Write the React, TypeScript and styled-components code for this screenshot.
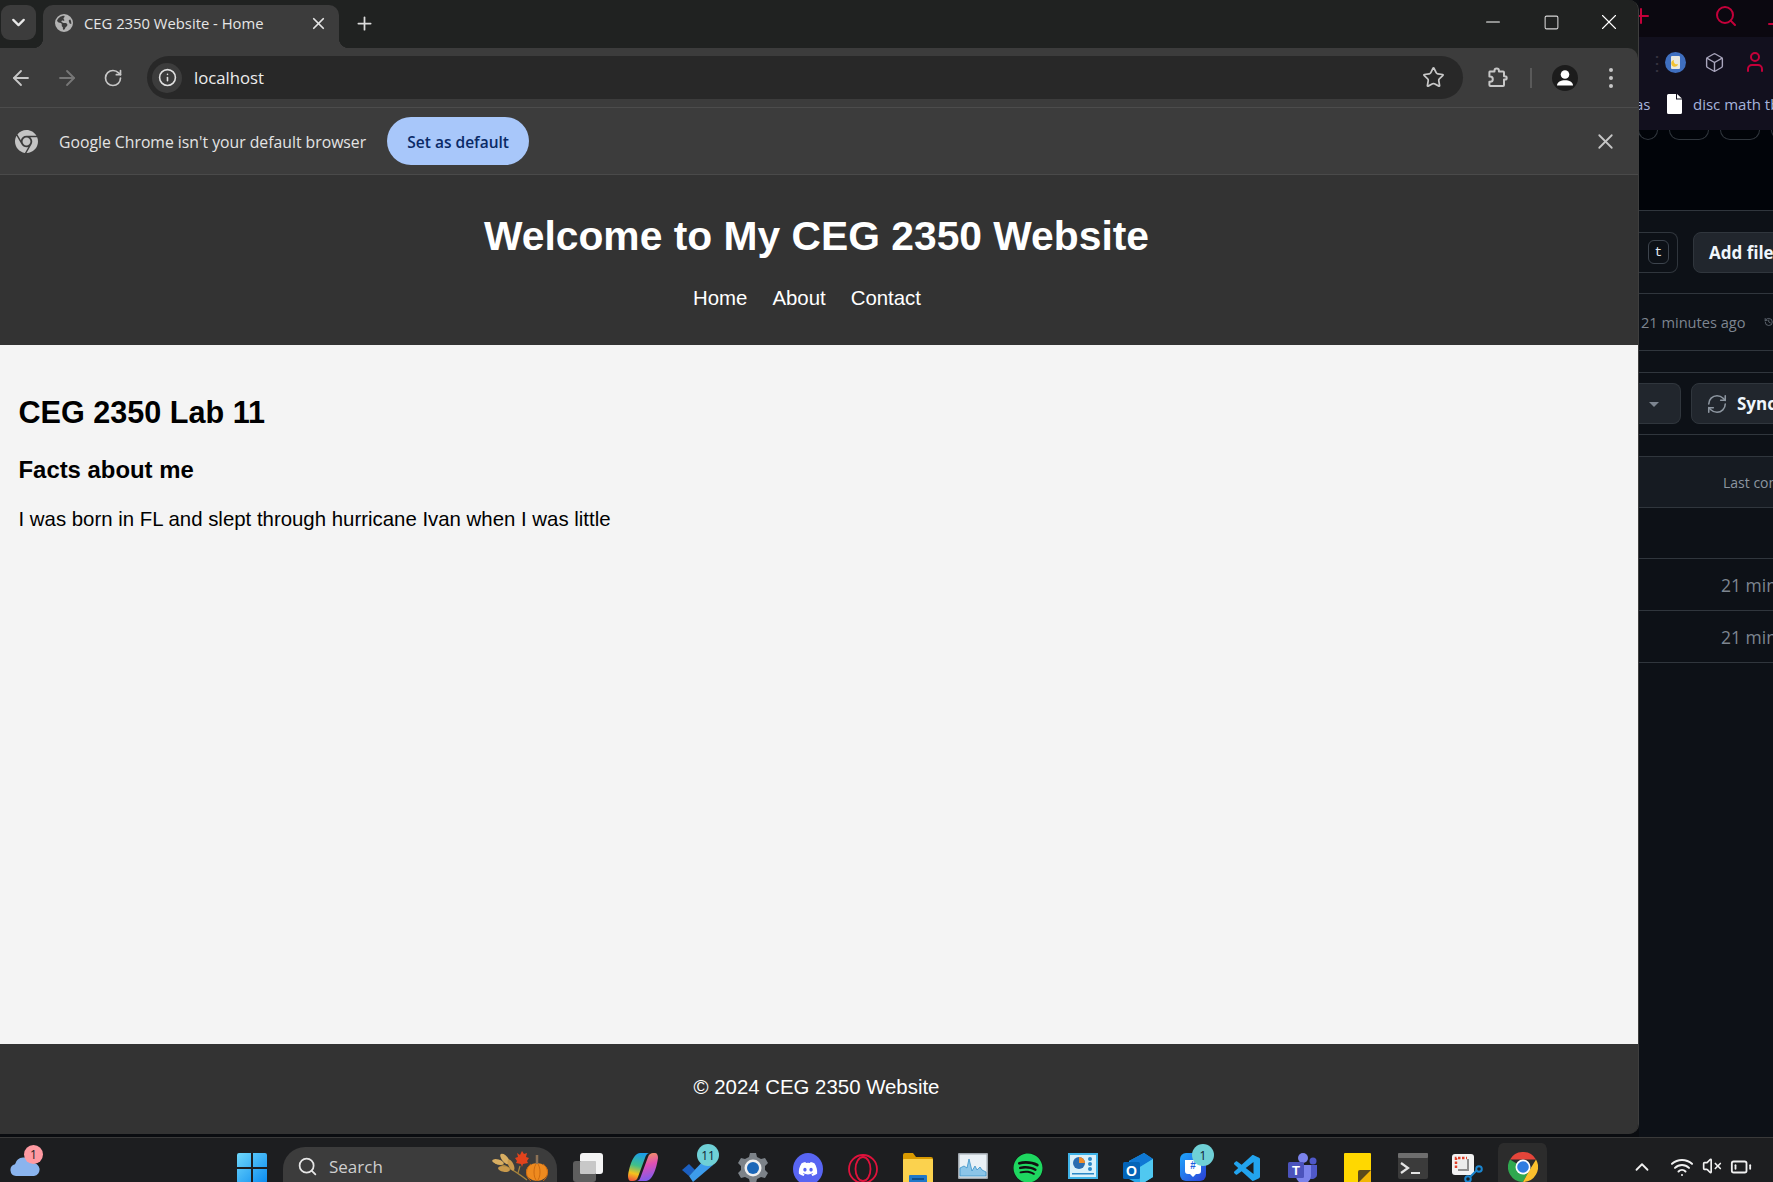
import React from "react";
import styled, { createGlobalStyle } from "styled-components";
import {
  ArrowLeft,
  ArrowRight,
  BatteryLow,
  Box,
  ChevronDown,
  ChevronUp,
  History,
  Info,
  Minus,
  Plus,
  RefreshCw,
  RotateCw,
  Search,
  Square,
  Star,
  User,
  VolumeX,
  Wifi,
  X,
} from "lucide-react";
import { FaDiscord, FaEarthAmericas, FaSpotify, FaChrome } from "react-icons/fa6";
import { VscVscode } from "react-icons/vsc";

const GlobalStyle = createGlobalStyle`
  html, body {
    margin: 0;
    padding: 0;
    overflow: hidden;
    background: #0d1117;
  }
  * {
    box-sizing: border-box;
  }
`;

const ExtensionIcon = () => (
  <svg width="24" height="24" viewBox="0 0 24 24" fill="none" stroke="#c7c7c7" strokeWidth="2" strokeLinejoin="round">
    <path d="M5 5.500h4.500V4.600a2.200 2.200 0 0 1 4.400 0v.9H18a1 1 0 0 1 1 1v3.700h1a1.700 1.700 0 0 1 0 3.400h-1V19a1 1 0 0 1-1 1H5.400a1 1 0 0 1-1-1v-3.200h.8a2.600 2.600 0 0 0 0-5.200h-.8V6.500a1 1 0 0 1 .6-1z" />
  </svg>
);

const AvatarGlyph = () => (
  <svg width="26" height="26" viewBox="0 0 26 26" fill="#fff">
    <circle cx="13" cy="9.500" r="4.300" />
    <path d="M5 20.500c0-3.500 4-5.300 8-5.300s8 1.800 8 5.300z" />
  </svg>
);

const DocIcon = () => (
  <svg width="16" height="20" viewBox="0 0 16 20">
    <path d="M1 1.500A1.500 1.500 0 0 1 2.500 0H10v5.500h6v13a1.500 1.500 0 0 1-1.500 1.500h-12A1.500 1.500 0 0 1 1 18.500z" fill="#fff" />
    <path d="M11 0l5 4.500h-5z" fill="#fff" />
  </svg>
);

const ThemeBadge = () => (
  <svg width="21" height="21" viewBox="0 0 21 21">
    <circle cx="10.500" cy="10.500" r="10.500" fill="#3f6fc0" />
    <rect x="6" y="4" width="9" height="13" rx="1" fill="#e8e8e0" />
    <path d="M9 8a3 3 0 0 0 4 4 3.400 3.400 0 1 1-4-4z" fill="#f2c230" />
  </svg>
);

const WindowsLogo = () => (
  <svg width="30" height="30" viewBox="0 0 30 30">
    <defs>
      <linearGradient id="winGrad" x1="0" y1="0" x2="1" y2="1">
        <stop offset="0" stopColor="#6fd8fb" />
        <stop offset="1" stopColor="#0a8bf0" />
      </linearGradient>
    </defs>
    <path d="M2 0h12v14H0V2a2 2 0 0 1 2-2zM16 0h12a2 2 0 0 1 2 2v12H16zM0 16h14v14H2a2 2 0 0 1-2-2zM16 16h14v12a2 2 0 0 1-2 2H16z" fill="url(#winGrad)" />
  </svg>
);

const TaskViewIcon = () => (
  <svg width="30" height="29" viewBox="0 0 30 29">
    <rect x="7" y="0" width="23" height="21" rx="3" fill="#f4f4f4" />
    <rect x="0" y="8" width="23" height="21" rx="3" fill="#5e5e5e" />
    <rect x="7" y="8" width="16" height="13" rx="1" fill="#c8c8c8" />
  </svg>
);

const CopilotIcon = () => (
  <svg width="30" height="28" viewBox="0 0 30 28">
    <defs>
      <linearGradient id="copA" x1="0.500" y1="0" x2="0.300" y2="1">
        <stop offset="0" stopColor="#1c9ee8" />
        <stop offset="0.45" stopColor="#3fc08a" />
        <stop offset="0.75" stopColor="#f5c21c" />
        <stop offset="1" stopColor="#ef5a3c" />
      </linearGradient>
      <linearGradient id="copB" x1="0.700" y1="1" x2="0.500" y2="0">
        <stop offset="0" stopColor="#f59a5a" />
        <stop offset="0.45" stopColor="#e04fb4" />
        <stop offset="1" stopColor="#7a5cf0" />
      </linearGradient>
    </defs>
    <path d="M12 0h10c-3 0-4 2-5 5l-7 19c-1 3-3 4-5 4H3c-2 0-3-2-3-5C1 15 5 0 12 0z" fill="url(#copA)" />
    <path d="M12 0h10c-3 0-4 2-5 5l-7 19c-1 3-3 4-5 4H3c-2 0-3-2-3-5C1 15 5 0 12 0z" fill="url(#copB)" transform="rotate(180 15 14)" />
  </svg>
);

const TodoIcon = () => (
  <svg width="32" height="29" viewBox="0 -7 32 29">
    <path d="M0 10l7-6 6 6-6 6z" fill="#1b5fc0" />
    <path d="M7 16l16-17 8 6-20 17z" fill="#3d9cec" />
  </svg>
);

const GearIcon = () => (
  <svg width="30" height="30" viewBox="0 0 30 30">
    <path d="M12 0h6l1 4 4 2 4-1 3 5-3 3v4l3 3-3 5-4-1-4 2-1 4h-6l-1-4-4-2-4 1-3-5 3-3v-4L0 10l3-5 4 1 4-2z" fill="#7c8288" />
    <circle cx="15" cy="15" r="8.500" fill="#eeeeee" />
    <circle cx="15" cy="15" r="6" fill="#1a66b8" />
  </svg>
);

const DiscordIcon = () => (
  <DiscordDisc>
    <FaDiscord size={20} color="#fff" />
  </DiscordDisc>
);

const OperaIcon = () => (
  <svg width="30" height="32" viewBox="0 0 30 32" fill="none" stroke="#e0123c" strokeWidth="1.800">
    <circle cx="15" cy="16" r="14" />
    <ellipse cx="15" cy="16" rx="7.500" ry="12" />
  </svg>
);

const FilesIcon = () => (
  <svg width="30" height="32" viewBox="0 0 30 32">
    <path d="M0 2a2 2 0 0 1 2-2h8l3 4h15a2 2 0 0 1 2 2v4H0z" fill="#d99a00" />
    <rect x="0" y="6" width="30" height="26" rx="1" fill="#fbd24e" />
    <rect x="6" y="22" width="18" height="10" rx="1" fill="#1f78c9" />
    <rect x="9" y="25" width="12" height="2" fill="#0e4f8c" />
  </svg>
);

const MonitorIcon = () => (
  <svg width="30" height="26" viewBox="0 0 30 26">
    <rect width="30" height="26" rx="1" fill="#9fa6ad" />
    <rect x="1.500" y="1.500" width="27" height="23" fill="#eaf1f6" />
    <path d="M2 23V15l4-2 3 2 2-9 3 12 3-5 2 4 3-3 2 3 4 2v4z" fill="#8cc5e8" stroke="#3a92c8" strokeWidth="0.800" />
  </svg>
);

const SpotifyIcon = () => (
  <SpotifyDisc>
    <FaSpotify size={30} color="#1ed760" />
  </SpotifyDisc>
);

const ControlIcon = () => (
  <svg width="30" height="28" viewBox="0 0 30 28">
    <rect width="30" height="26" fill="#3fb3e8" />
    <rect x="2" y="2" width="26" height="22" fill="#d9f0fa" />
    <circle cx="11" cy="10" r="6" fill="#2b6cb0" />
    <path d="M11 10V4a6 6 0 0 1 6 6z" fill="#f28c28" />
    <circle cx="22" cy="6" r="2" fill="#2b88c8" />
    <circle cx="22" cy="11" r="2" fill="#2b88c8" />
    <circle cx="22" cy="16" r="2" fill="#2b88c8" />
    <rect x="4" y="20" width="22" height="1.500" fill="#2b88c8" />
  </svg>
);

const OutlookIcon = () => (
  <svg width="30" height="32" viewBox="0 0 30 32">
    <path d="M6 8L21 0l9 6v18L17 32 6 26z" fill="#28a8ea" />
    <path d="M21 0l9 6-13 8L6 8z" fill="#0f78d4" />
    <path d="M17 14l13-8v18L17 32z" fill="#50c8f0" />
    <rect x="0" y="9" width="17" height="17" rx="1.500" fill="#0364b8" />
    <text x="8.500" y="22.500" fontSize="14" fontWeight="700" fill="#fff" textAnchor="middle" fontFamily="Liberation Sans, sans-serif">O</text>
  </svg>
);

const GroupMeIcon = () => (
  <svg width="26" height="28" viewBox="0 0 26 28">
    <defs>
      <linearGradient id="gmGrad" x1="0" y1="0" x2="1" y2="1">
        <stop offset="0" stopColor="#1ea7fd" />
        <stop offset="1" stopColor="#2b3fd6" />
      </linearGradient>
    </defs>
    <rect width="26" height="28" rx="6" fill="url(#gmGrad)" />
    <path d="M5 7h16v11a3 3 0 0 1-3 3h-2l-3 3-3-3H8a3 3 0 0 1-3-3z" fill="#fff" />
    <text x="13" y="16" fontSize="10" fontWeight="700" fill="#1d5fe0" textAnchor="middle" fontFamily="Liberation Sans, sans-serif">#</text>
  </svg>
);

const TeamsIcon = () => (
  <svg width="30" height="30" viewBox="0 0 30 30">
    <circle cx="15" cy="5" r="5" fill="#7b83eb" />
    <circle cx="25" cy="8" r="3.500" fill="#5059c9" />
    <path d="M19 12h10v10a5 5 0 0 1-8 3z" fill="#5059c9" />
    <path d="M8 12h15v11a7 7 0 0 1-15 0z" fill="#7b83eb" />
    <rect x="0" y="9" width="16" height="16" rx="1.500" fill="#4b53bc" />
    <text x="8" y="21.500" fontSize="13" fontWeight="700" fill="#fff" textAnchor="middle" fontFamily="Liberation Sans, sans-serif">T</text>
  </svg>
);

const StickyIcon = () => (
  <svg width="27" height="30" viewBox="0 0 27 30">
    <path d="M1 0h25a1 1 0 0 1 1 1v18L16 30H1a1 1 0 0 1-1-1V1a1 1 0 0 1 1-1z" fill="#ffd800" />
    <path d="M14 30V19a2 2 0 0 1 2-2h11v13z" fill="#f2b705" />
    <path d="M14 30V19a2 2 0 0 1 2-2h11z" fill="#5a4a1c" />
  </svg>
);

const TerminalIcon = () => (
  <svg width="30" height="26" viewBox="0 0 30 26">
    <rect width="30" height="26" rx="2" fill="#3b3b3b" />
    <rect width="30" height="5" rx="1" fill="#6e6e6e" />
    <path d="M3 10l7 5-7 5" fill="none" stroke="#e4e4e4" strokeWidth="2.200" />
    <rect x="13" y="19" width="9" height="2" fill="#e4e4e4" />
  </svg>
);

const SnipIcon = () => (
  <svg width="32" height="30" viewBox="0 -1 32 30">
    <rect width="22" height="21" rx="3" fill="#f2f2f2" />
    <path d="M4 14V4h11" fill="none" stroke="#e0402a" strokeWidth="2.500" strokeDasharray="2.500 1.500" />
    <path d="M6 6h9v9H6z" fill="#ececec" />
    <path d="M16 5v11H6" fill="none" stroke="#8f8f8f" strokeWidth="2" />
    <circle cx="27" cy="15" r="2.800" fill="none" stroke="#1a86d0" strokeWidth="2" />
    <circle cx="16" cy="25" r="2.800" fill="none" stroke="#1a86d0" strokeWidth="2" />
    <path d="M24.500 16.500l-6 6" stroke="#1a86d0" strokeWidth="2" />
  </svg>
);

const ChromeColorIcon = () => (
  <svg width="30" height="30" viewBox="0 0 30 30">
    <path d="M2 7.500A15 15 0 0 1 28 7.500H15z" fill="#e5453a" />
    <path d="M2 7.500A15 15 0 0 0 15 30l6-11z" fill="#2fa84f" />
    <path d="M28 7.500A15 15 0 0 1 15 30l6-11z" fill="#fbc02d" />
    <circle cx="15" cy="15" r="7.500" fill="#fff" />
    <circle cx="15" cy="15" r="5.800" fill="#2f7de1" />
  </svg>
);

const LeavesIcon = () => (
  <svg width="58" height="30" viewBox="0 0 58 30">
    <path d="M4 12c8 1 18 6 32 17" fill="none" stroke="#a8843c" strokeWidth="1.300" />
    <ellipse cx="7" cy="11" rx="6" ry="2.500" fill="#d8ae62" transform="rotate(15 7 11)" />
    <ellipse cx="14" cy="8" rx="6.500" ry="3" fill="#d8ae62" transform="rotate(50 14 8)" />
    <ellipse cx="13" cy="18" rx="6" ry="2.800" fill="#c99a4c" transform="rotate(10 13 18)" />
    <ellipse cx="20" cy="14" rx="6" ry="2.600" fill="#c99a4c" transform="rotate(65 20 14)" />
    <path d="M29 4l2-4 2 3 3-1-1 4 3 1-2 3 1 2-5 1-1 3-1-3-5-1 1-2-2-3 3-1-1-4z" fill="#e2431c" />
    <path d="M29 15l-2 7" stroke="#a8843c" strokeWidth="1.200" />
    <ellipse cx="46" cy="21" rx="11" ry="9" fill="#ee8a1f" />
    <path d="M46 12c-4 3-4 15 0 18M46 12c4 3 4 15 0 18M40 13c-6 4-6 13 0 17M52 13c6 4 6 13 0 17" fill="none" stroke="#c8670f" strokeWidth="0.900" />
    <path d="M46 13V4" stroke="#8d7256" strokeWidth="2.500" />
  </svg>
);

const tasks: { name: string; icon: React.ReactNode; badge?: string; active?: boolean }[] = [
  { name: "task-view", icon: <TaskViewIcon /> },
  { name: "copilot", icon: <CopilotIcon /> },
  { name: "todo", icon: <TodoIcon />, badge: "11" },
  { name: "settings", icon: <GearIcon /> },
  { name: "discord", icon: <DiscordIcon /> },
  { name: "opera", icon: <OperaIcon /> },
  { name: "files", icon: <FilesIcon /> },
  { name: "monitor", icon: <MonitorIcon /> },
  { name: "spotify", icon: <SpotifyIcon /> },
  { name: "control", icon: <ControlIcon /> },
  { name: "outlook", icon: <OutlookIcon /> },
  { name: "groupme", icon: <GroupMeIcon />, badge: "1" },
  { name: "vscode", icon: <VscVscode size={32} color="#22a4ee" /> },
  { name: "teams", icon: <TeamsIcon /> },
  { name: "sticky", icon: <StickyIcon /> },
  { name: "terminal", icon: <TerminalIcon /> },
  { name: "snip", icon: <SnipIcon /> },
  { name: "chrome", icon: <ChromeColorIcon />, active: true },
];

const App: React.FC = () => {
  return (
    <>
      <GlobalStyle />
      <Desktop>
        <Workspace>
          <BrowserWindow>
            <TabStrip>
              <TabSearchButton>
                <ChevronDown size={21} strokeWidth={2.6} color="#e8e8e8" />
              </TabSearchButton>
              <Tab>
                <FaEarthAmericas size={18} color="#b4b4b4" />
                <TabTitle>CEG 2350 Website - Home</TabTitle>
                <X size={19} strokeWidth={2.2} color="#e4e4e4" />
              </Tab>
              <NewTabButton>
                <Plus size={21} strokeWidth={2} color="#dcdcdc" />
              </NewTabButton>
              <WindowControls>
                <ControlButton>
                  <Minus size={22} strokeWidth={1.1} color="#fff" />
                </ControlButton>
                <ControlButton>
                  <Square size={17} strokeWidth={1.5} color="#d8d8d8" />
                </ControlButton>
                <ControlButton>
                  <X size={26} strokeWidth={1} color="#fff" />
                </ControlButton>
              </WindowControls>
            </TabStrip>

            <Toolbar>
              <NavButton>
                <ArrowLeft size={24} strokeWidth={1.8} color="#c7c7c7" />
              </NavButton>
              <NavButton>
                <ArrowRight size={24} strokeWidth={1.8} color="#777" />
              </NavButton>
              <NavButton>
                <RotateCw size={20} color="#c7c7c7" />
              </NavButton>
              <Omnibox>
                <InfoChip>
                  <Info size={19} color="#e0e0e0" />
                </InfoChip>
                <UrlText>localhost</UrlText>
                <Star size={23} strokeWidth={1.8} color="#c7c7c7" />
              </Omnibox>
              <ToolbarIcons>
                <ExtensionIcon />
                <ToolbarDivider />
                <Avatar>
                  <AvatarGlyph />
                </Avatar>
                <KebabDots>
                  <i />
                  <i />
                  <i />
                </KebabDots>
              </ToolbarIcons>
            </Toolbar>

            <InfoBar>
              <FaChrome size={23} color="#c4c4c4" />
              <InfoText>Google Chrome isn't your default browser</InfoText>
              <DefaultButton>Set as default</DefaultButton>
              <InfoClose>
                <X size={25} strokeWidth={1.7} color="#c7c7c7" />
              </InfoClose>
            </InfoBar>

            <SiteHeader>
              <SiteTitle>Welcome to My CEG 2350 Website</SiteTitle>
              <SiteNav>
                <a>Home</a>
                <a>About</a>
                <a>Contact</a>
              </SiteNav>
            </SiteHeader>

            <SiteMain>
              <LabHeading>CEG 2350 Lab 11</LabHeading>
              <FactsHeading>Facts about me</FactsHeading>
              <FactText>I was born in FL and slept through hurricane Ivan when I was little</FactText>
            </SiteMain>

            <SiteFooter>© 2024 CEG 2350 Website</SiteFooter>
          </BrowserWindow>

          <BehindWindow>
            <BehindTopStrip>
              <Plus size={24} color="#c4003a" />
              <Search size={24} color="#c4003a" />
              <Minus size={24} color="#c4003a" />
            </BehindTopStrip>
            <BehindExtensions>
              <ExtensionRow>
                <FaintDots>⋮</FaintDots>
                <ThemeBadge />
                <Box size={21} strokeWidth={1.6} color="#a9a6bd" />
                <User size={24} color="#c4003a" />
              </ExtensionRow>
              <BookmarkRow>
                <span>as</span>
                <DocIcon />
                <span>disc math tb</span>
              </BookmarkRow>
            </BehindExtensions>
            <BehindTabs>
              <OutlinePill $width={20} />
              <OutlinePill $width={40} />
              <OutlinePill $width={40} />
              <OutlinePill $width={20} />
            </BehindTabs>

            <RepoRow $height={83}>
              <SearchStub>
                <KeyCap>t</KeyCap>
              </SearchStub>
              <AddFileButton>Add file</AddFileButton>
            </RepoRow>
            <RepoRow $height={57}>
              <MutedText>21 minutes ago</MutedText>
              <History size={24} strokeWidth={1.7} color="#7d8590" />
            </RepoRow>
            <RepoRow $height={22} />
            <RepoRow $height={62}>
              <CaretStub />
              <SyncButton>
                <RefreshCw size={22} strokeWidth={1.7} color="#8d96a0" />
                Sync
              </SyncButton>
            </RepoRow>
            <RepoRow $height={22} />
            <TableHead>Last commit date</TableHead>
            <RepoRow $height={51} />
            <FileDate>21 minutes ago</FileDate>
            <FileDate>21 minutes ago</FileDate>
          </BehindWindow>
        </Workspace>

        <Taskbar>
          <WeatherWidget>
            <svg width="30" height="22" viewBox="0 0 30 22">
              <path d="M6 22a6 6 0 0 1-1-11.800A9 9 0 0 1 22 9a6.500 6.500 0 0 1 2 13z" fill="#8ab4ee" />
            </svg>
            <WeatherBadge>1</WeatherBadge>
          </WeatherWidget>
          <StartButton>
            <WindowsLogo />
          </StartButton>
          <SearchBox>
            <Search size={21} color="#e6e6e6" />
            <SearchLabel>Search</SearchLabel>
            <LeavesIcon />
          </SearchBox>
          {tasks.map((task) => (
            <TaskSlot key={task.name} $active={task.active}>
              {task.icon}
              {task.badge && <TaskBadge>{task.badge}</TaskBadge>}
            </TaskSlot>
          ))}
          <Tray>
            <ChevronUp size={22} color="#f0f0f0" />
            <Wifi size={24} color="#f0f0f0" />
            <VolumeX size={20} color="#f0f0f0" />
            <BatteryLow size={22} color="#f0f0f0" />
          </Tray>
        </Taskbar>
      </Desktop>
    </>
  );
};

const Desktop = styled.div`
  width: 1773px;
  height: 1182px;
  display: flex;
  flex-direction: column;
  overflow: hidden;
  background: #0a0c10;
`;

const Workspace = styled.div`
  display: flex;
  height: 1137px;
  flex: none;
`;

const BrowserWindow = styled.div`
  width: 1639px;
  height: 1134px;
  flex: none;
  display: flex;
  flex-direction: column;
  overflow: hidden;
  border-right: 1px solid #3e3e3e;
  border-radius: 0 10px 10px 0;
  background: #202221;
`;

const TabStrip = styled.div`
  height: 48px;
  flex: none;
  display: flex;
  align-items: flex-end;
  padding-left: 1px;
  background: #202221;
`;

const TabSearchButton = styled.div`
  width: 35px;
  height: 35px;
  margin-bottom: 8px;
  display: flex;
  align-items: center;
  justify-content: center;
  border-radius: 9px;
  background: #3c3c3c;
`;

const Tab = styled.div`
  position: relative;
  width: 296px;
  height: 43px;
  margin-left: 7px;
  padding: 0 11px 7px 12px;
  display: flex;
  align-items: center;
  border-radius: 10px 10px 0 0;
  background: #3c3c3c;

  &::before,
  &::after {
    content: "";
    position: absolute;
    bottom: 0;
    width: 10px;
    height: 10px;
  }
  &::before {
    left: -10px;
    background: radial-gradient(circle at 0 0, transparent 10px, #3c3c3c 10.5px);
  }
  &::after {
    right: -10px;
    background: radial-gradient(circle at 100% 0, transparent 10px, #3c3c3c 10.5px);
  }
`;

const TabTitle = styled.span`
  flex: 1;
  margin-left: 11px;
  font: 14.800px "Open Sans", sans-serif;
  color: #e6e6e6;
  white-space: nowrap;
`;

const NewTabButton = styled.div`
  width: 28px;
  height: 28px;
  margin: 0 0 11px 11px;
  display: flex;
  align-items: center;
  justify-content: center;
`;

const WindowControls = styled.div`
  margin-left: auto;
  height: 100%;
  display: flex;
`;

const ControlButton = styled.div`
  width: 58px;
  padding-bottom: 4px;
  display: flex;
  align-items: center;
  justify-content: center;
`;

const Toolbar = styled.div`
  height: 60px;
  flex: none;
  display: flex;
  align-items: center;
  background: #3c3c3c;
  border-bottom: 1px solid #4c4c4c;
  border-top-right-radius: 10px;
`;

const NavButton = styled.div`
  width: 46px;
  display: flex;
  align-items: center;
  justify-content: center;

  &:first-child {
    margin-left: -2px;
  }
`;

const Omnibox = styled.div`
  width: 1316px;
  height: 43px;
  margin-left: 11px;
  padding: 0 18px 0 5px;
  display: flex;
  align-items: center;
  border-radius: 22px;
  background: #282828;
`;

const InfoChip = styled.div`
  width: 30px;
  height: 30px;
  display: flex;
  align-items: center;
  justify-content: center;
  border-radius: 50%;
  background: #3c3c3c;
`;

const UrlText = styled.span`
  flex: 1;
  margin-left: 12px;
  font: 16.700px "Open Sans", sans-serif;
  color: #ededed;
`;

const ToolbarIcons = styled.div`
  flex: 1;
  display: flex;
  align-items: center;
  padding-left: 22px;
`;

const ToolbarDivider = styled.div`
  width: 2px;
  height: 20px;
  margin: 0 20px 0 21px;
  background: #5a5a5a;
`;

const Avatar = styled.div`
  width: 26px;
  height: 26px;
  display: flex;
  align-items: center;
  justify-content: center;
  border-radius: 50%;
  background: #1c1c1c;
`;

const KebabDots = styled.div`
  margin-left: 31px;
  display: flex;
  flex-direction: column;
  gap: 4px;

  i {
    width: 4px;
    height: 4px;
    border-radius: 50%;
    background: #c7c7c7;
  }
`;

const InfoBar = styled.div`
  height: 67px;
  flex: none;
  display: flex;
  align-items: center;
  padding: 0 20px 0 15px;
  background: #3c3c3c;
  border-bottom: 1px solid #4a4a4a;
`;

const InfoText = styled.span`
  margin-left: 21px;
  padding-top: 2px;
  font: 15.750px "Open Sans", sans-serif;
  color: #e4e4e4;
  white-space: nowrap;
`;

const DefaultButton = styled.button`
  width: 142px;
  height: 48px;
  margin-left: 21px;
  padding: 2px 0 0;
  border: none;
  border-radius: 24px;
  background: #a8c7fa;
  color: #0a2a66;
  font: 600 15.500px "Open Sans", sans-serif;
`;

const InfoClose = styled.div`
  margin-left: auto;
  display: flex;
`;

const SiteHeader = styled.header`
  height: 170px;
  flex: none;
  padding: 38px 5px 0 0;
  background: #333;
  color: #fff;
  text-align: center;
  font-family: "Liberation Sans", Arial, sans-serif;
`;

const SiteTitle = styled.h1`
  margin: 0 0 27px;
  font-size: 40.800px;
  font-weight: 700;
`;

const SiteNav = styled.nav`
  display: flex;
  justify-content: center;
  gap: 25px;
  padding-right: 19px;
  font-size: 20.400px;
`;

const SiteMain = styled.main`
  flex: 1;
  padding: 50px 0 0 18.500px;
  background: #f4f4f4;
  color: #000;
  font-family: "Liberation Sans", Arial, sans-serif;
`;

const LabHeading = styled.h2`
  margin: 0 0 26px;
  font-size: 30.600px;
  font-weight: 700;
`;

const FactsHeading = styled.h3`
  margin: 0 0 23.500px;
  font-size: 23.900px;
  font-weight: 700;
`;

const FactText = styled.p`
  margin: 0;
  font-size: 20.400px;
`;

const SiteFooter = styled.footer`
  height: 90px;
  flex: none;
  display: flex;
  align-items: center;
  justify-content: center;
  padding: 0 5px 3px 0;
  background: #333;
  color: #fff;
  font: 20.400px "Liberation Sans", Arial, sans-serif;
`;

const BehindWindow = styled.div`
  flex: 1;
  min-width: 0;
  overflow: hidden;
  display: flex;
  flex-direction: column;
  background: #0d1117;
  font-family: "Open Sans", sans-serif;
`;

const BehindTopStrip = styled.div`
  height: 37px;
  flex: none;
  display: flex;
  align-items: flex-start;
  gap: 61px;
  padding-top: 4px;
  margin-left: -10px;
  width: 190px;
  background: #0b0810;

  svg:last-child {
    margin-top: 8px;
    margin-left: -35px;
  }
`;

const BehindExtensions = styled.div`
  height: 93px;
  flex: none;
  background: #12101e;
`;

const ExtensionRow = styled.div`
  height: 50px;
  display: flex;
  align-items: center;
  gap: 18px;
  padding-left: 8px;
`;

const FaintDots = styled.span`
  width: 3px;
  margin-right: -3px;
  color: #35323f;
  font-size: 20px;
`;

const BookmarkRow = styled.div`
  height: 34px;
  display: flex;
  align-items: center;
  white-space: nowrap;
  font-size: 15px;
  color: #a6b4dc;

  svg {
    flex: none;
    margin: 0 11px 0 17px;
  }
  span:first-child {
    flex: none;
    width: 14px;
    margin-left: -4px;
  }
`;

const BehindTabs = styled.div`
  height: 81px;
  flex: none;
  display: flex;
  gap: 11px;
  margin-left: -1px;
  background: #010409;
  border-bottom: 1px solid #30363d;
`;

const OutlinePill = styled.div<{ $width: number }>`
  flex: none;
  width: ${(p) => p.$width}px;
  height: 10px;
  border: 1px solid #30363d;
  border-top: none;
  border-radius: 0 0 10px 10px;
`;

const RepoRow = styled.div<{ $height: number }>`
  height: ${(p) => p.$height}px;
  flex: none;
  display: flex;
  align-items: center;
  white-space: nowrap;
  border-bottom: 1px solid #30363d;
`;

const SearchStub = styled.div`
  width: 39px;
  height: 41px;
  flex: none;
  display: flex;
  align-items: center;
  padding-left: 9px;
  border: 1px solid #30363d;
  border-left: none;
  border-radius: 0 8px 8px 0;
`;

const KeyCap = styled.kbd`
  width: 21px;
  height: 24px;
  display: flex;
  align-items: center;
  justify-content: center;
  border: 1px solid #3d444d;
  border-radius: 6px;
  color: #e6edf3;
  font: 13px "Liberation Mono", monospace;
`;

const AddFileButton = styled.div`
  height: 41px;
  flex: none;
  margin-left: 15px;
  padding: 0 15px;
  display: flex;
  align-items: center;
  border: 1px solid #30363d;
  border-radius: 8px;
  background: #21262d;
  color: #f0f6fc;
  font-size: 17px;
  font-weight: 700;
`;

const MutedText = styled.span`
  margin: 0 18px 0 2px;
  color: #7d8590;
  font-size: 14.600px;
`;

const CaretStub = styled.div`
  position: relative;
  width: 42px;
  height: 41px;
  flex: none;
  border: 1px solid #30363d;
  border-left: none;
  border-radius: 0 8px 8px 0;
  background: #21262d;

  &::after {
    content: "";
    position: absolute;
    left: 10px;
    top: 18px;
    border: 5px solid transparent;
    border-top-color: #7d8590;
  }
`;

const SyncButton = styled.div`
  height: 41px;
  flex: none;
  margin-left: 10px;
  padding: 0 14px;
  display: flex;
  align-items: center;
  gap: 9px;
  border: 1px solid #30363d;
  border-radius: 8px;
  background: #21262d;
  color: #f0f6fc;
  font-size: 17px;
  font-weight: 700;
`;

const TableHead = styled.div`
  height: 51px;
  flex: none;
  display: flex;
  align-items: center;
  padding-left: 84px;
  white-space: nowrap;
  border-bottom: 1px solid #30363d;
  background: #161b22;
  color: #8d96a0;
  font-size: 14px;
  font-weight: 500;
`;

const FileDate = styled.div`
  height: 52px;
  flex: none;
  display: flex;
  align-items: center;
  padding-left: 82px;
  white-space: nowrap;
  border-bottom: 1px solid #30363d;
  color: #7d8590;
  font-size: 17.500px;
`;

const Taskbar = styled.div`
  height: 45px;
  flex: none;
  display: flex;
  border-top: 1px solid #3a3a3a;
  background: #1d1e20;
`;

const WeatherWidget = styled.div`
  position: relative;
  width: 224px;
  flex: none;
  padding: 16px 0 0 10px;
`;

const WeatherBadge = styled.span`
  position: absolute;
  left: 24px;
  top: 7px;
  width: 19px;
  height: 19px;
  display: flex;
  align-items: center;
  justify-content: center;
  border-radius: 50%;
  background: #ff9aa2;
  color: #222;
  font: 12px "Open Sans", sans-serif;
`;

const StartButton = styled.div`
  width: 55px;
  flex: none;
  padding-top: 15px;
  display: flex;
  justify-content: center;
`;

const SearchBox = styled.div`
  width: 274px;
  height: 44px;
  flex: none;
  margin: 9px 3px 0 4px;
  padding: 0 8px 6px 14px;
  display: flex;
  align-items: center;
  border-radius: 22px 22px 0 0;
  background: #3c3c3c;
`;

const SearchLabel = styled.span`
  flex: 1;
  margin-left: 11px;
  font: 17px "Open Sans", sans-serif;
  color: #cfcfcf;
`;

const TaskSlot = styled.div<{ $active?: boolean }>`
  position: relative;
  width: 55px;
  flex: none;
  display: flex;
  justify-content: center;
  border-left: 3px solid transparent;
  border-right: 3px solid transparent;
  border-radius: 8px 8px 0 0;
  background-clip: padding-box;
  margin-top: ${(p) => (p.$active ? "5px" : "0")};
  padding-top: ${(p) => (p.$active ? "9px" : "15px")};
  background-color: ${(p) => (p.$active ? "#2c2c2c" : "transparent")};
`;

const DiscordDisc = styled.div`
  width: 30px;
  height: 32px;
  display: flex;
  align-items: center;
  justify-content: center;
  border-radius: 50%;
  background: #5865f2;
`;

const SpotifyDisc = styled.div`
  width: 30px;
  height: 30px;
  border-radius: 50%;
  background: #111;
`;

const TaskBadge = styled.span`
  position: absolute;
  left: 24px;
  top: 6px;
  width: 22px;
  height: 22px;
  display: flex;
  align-items: center;
  justify-content: center;
  border-radius: 50%;
  background: #6fd0d6;
  color: #123;
  font: 12px "Open Sans", sans-serif;
`;

const Tray = styled.div`
  flex: 1;
  display: flex;
  align-items: flex-start;
  gap: 8px;
  padding: 18px 0 0 81px;

  svg:first-child {
    margin-right: 9px;
  }
  svg:nth-child(2) {
    margin-top: -1px;
  }
`;

export default App;
